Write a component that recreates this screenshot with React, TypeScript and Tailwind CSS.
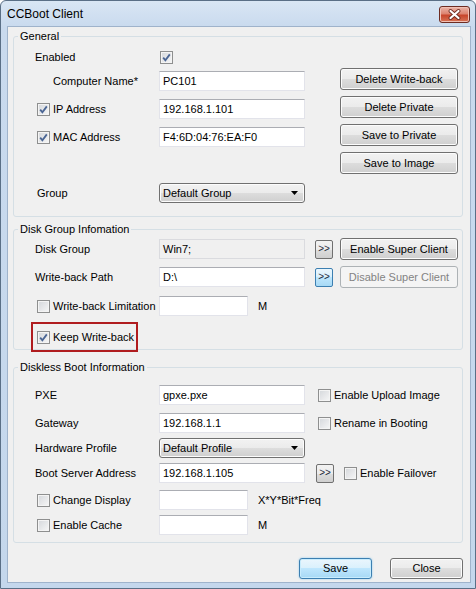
import type { ReactNode } from 'react'

const btn =
  'flex items-center justify-center rounded-[3px] border border-[#707070] bg-[linear-gradient(#f2f2f2_0%,#ebebeb_50%,#dddddd_50%,#cfcfcf_100%)] shadow-[inset_0_0_0_1px_#fcfcfc] text-[11px] text-black'

const field = 'flex h-[20px] items-center border border-[#e2e3ea] border-t-[#abadb3] bg-white px-[3px] text-[11px]'

function Check({ checked = false }: { checked?: boolean }) {
  return (
    <span className="flex h-[13px] w-[13px] shrink-0 items-center justify-center border border-[#8e8f8f] bg-[linear-gradient(135deg,#d4d7db,#f7f7f7)] shadow-[inset_0_0_0_1px_#f4f4f4]">
      {checked && (
        <svg width="11" height="11" viewBox="0 0 11 11">
          <path d="M2.2 5.6 L4.4 8.3 L8.8 2.4" fill="none" stroke="#4a6594" strokeWidth="1.8" />
        </svg>
      )}
    </span>
  )
}

function Arrows({ hot = false }: { hot?: boolean }) {
  return (
    <button
      className={
        hot
          ? 'flex h-[19px] w-[18px] shrink-0 items-center justify-center rounded-[2px] border border-[#3c7fb1] bg-[linear-gradient(#eaf6fd_0%,#d9f0fc_50%,#bee6fd_50%,#a7d9f5_100%)] text-[10px] leading-none text-[#1e2a3a]'
          : 'flex h-[19px] w-[18px] shrink-0 items-center justify-center rounded-[2px] border border-[#707070] bg-[linear-gradient(#f2f2f2_0%,#ebebeb_50%,#dddddd_50%,#cfcfcf_100%)] text-[10px] leading-none text-[#1e2a3a]'
      }
    >
      &gt;&gt;
    </button>
  )
}

function Select({ value }: { value: string }) {
  return (
    <div className={btn + ' h-[20px] w-[146px] !justify-between pl-[3px] pr-[6px]'}>
      <span>{value}</span>
      <svg width="7" height="4" viewBox="0 0 7 4">
        <polygon points="0,0 7,0 3.5,4" fill="#000" />
      </svg>
    </div>
  )
}

function Label({ children, pad }: { children: ReactNode; pad: string }) {
  return <div className={'flex w-[145px] shrink-0 items-center text-[11px] ' + pad}>{children}</div>
}

function CheckLabel({ text, checked = false }: { text: string; checked?: boolean }) {
  return (
    <Label pad="pl-[23px]">
      <Check checked={checked} />
      <span className="ml-[3px]">{text}</span>
    </Label>
  )
}

function Group({ title, className, children }: { title: string; className: string; children: ReactNode }) {
  return (
    <fieldset className={'mx-[5px] mr-[7px] rounded-[3px] border border-[#d5dfe5] ' + className}>
      <legend className="ml-[4px] px-[2px] text-[11px] leading-[14px]">{title}</legend>
      {children}
    </fieldset>
  )
}

export default function App() {
  return (
    <div className="flex h-[589px] w-[476px] flex-col rounded-t-[6px] border border-[#5a6f86] bg-[linear-gradient(#d9e6f4,#c9daee_26px,#c4d7ec)] font-['Liberation_Sans',Arial,sans-serif] text-black">
      {/* title bar */}
      <div className="flex h-[25px] shrink-0 items-start justify-between pl-[6px] pr-[5px]">
        <span className="mt-[5px] text-[12px] leading-[16px]">CCBoot Client</span>
        <button className="mt-[5px] flex h-[17px] w-[31px] items-center justify-center rounded-[3px] border border-[#6d2c22] bg-[linear-gradient(#ebb4a8_0%,#dd8470_45%,#c8462c_55%,#d77457_100%)] shadow-[inset_0_0_0_1px_#f0c0b4]">
          <svg width="13" height="11" viewBox="0 0 13 11">
            <path d="M2.5 2 L10.5 9 M10.5 2 L2.5 9" stroke="#6b2a1f" strokeWidth="3.8" strokeLinecap="round" />
            <path d="M2.5 2 L10.5 9 M10.5 2 L2.5 9" stroke="#ffffff" strokeWidth="2.2" strokeLinecap="round" />
          </svg>
        </button>
      </div>

      {/* client area */}
      <div className="ml-[6px] mr-[4px] flex h-[557px] shrink-0 flex-col border border-[#9fb3cb] bg-[#f0f0f0]">
        <Group title="General" className="mt-[2px] pb-[13px]">
          <div className="flex">
            <div className="flex w-[291px] flex-col">
              <div className="mt-[4px] flex h-[20px] items-center">
                <Label pad="pl-[21px]">Enabled</Label>
                <span className="ml-[1px]">
                  <Check checked />
                </span>
              </div>
              <div className="mt-[4px] flex h-[20px] items-center">
                <Label pad="pl-[39px]">Computer Name*</Label>
                <div className={field + ' w-[146px]'}>PC101</div>
              </div>
              <div className="mt-[8px] flex h-[20px] items-center">
                <CheckLabel text="IP Address" checked />
                <div className={field + ' w-[146px]'}>192.168.1.101</div>
              </div>
              <div className="mt-[8px] flex h-[20px] items-center">
                <CheckLabel text="MAC Address" checked />
                <div className={field + ' w-[146px]'}>F4:6D:04:76:EA:F0</div>
              </div>
              <div className="mt-[36px] flex h-[20px] items-center">
                <Label pad="pl-[23px]">Group</Label>
                <Select value="Default Group" />
              </div>
            </div>
            <div className="ml-[35px] flex flex-col gap-[6px] pt-[25px]">
              <button className={btn + ' h-[22px] w-[118px]'}>Delete Write-back</button>
              <button className={btn + ' h-[22px] w-[118px]'}>Delete Private</button>
              <button className={btn + ' h-[22px] w-[118px]'}>Save to Private</button>
              <button className={btn + ' h-[22px] w-[118px]'}>Save to Image</button>
            </div>
          </div>
        </Group>

        <Group title="Disk Group Infomation" className="mt-[5px]">
          <div className="mt-[2px] flex h-[22px] items-center">
            <Label pad="pl-[21px]">Disk Group</Label>
            <div className="flex h-[20px] w-[146px] items-center border border-[#dadbdf] bg-[#f0f0f0] px-[3px] text-[11px]">
              Win7;
            </div>
            <span className="ml-[10px]">
              <Arrows />
            </span>
            <button className={btn + ' ml-[7px] h-[22px] w-[118px]'}>Enable Super Client</button>
          </div>
          <div className="mt-[6px] flex h-[22px] items-center">
            <Label pad="pl-[21px]">Write-back Path</Label>
            <div className={field + ' w-[146px]'}>D:\</div>
            <span className="ml-[10px]">
              <Arrows hot />
            </span>
            <button className="ml-[7px] flex h-[22px] w-[118px] items-center justify-center rounded-[3px] border border-[#adb2b5] bg-[#f4f4f4] text-[11px] text-[#838383]">
              Disable Super Client
            </button>
          </div>
          <div className="mt-[8px] flex h-[20px] items-center">
            <CheckLabel text="Write-back Limitation" />
            <div className={field + ' w-[89px]'} />
            <span className="ml-[10px] text-[11px]">M</span>
          </div>
          <div className="-mb-[3px] ml-[17px] mt-[6px] flex h-[30px] w-[107px] items-center border-2 border-[#b01c1f] pl-[4px] text-[11px]">
            <Check checked />
            <span className="ml-[3px]">Keep Write-back</span>
          </div>
        </Group>

        <Group title="Diskless Boot Information" className="mt-[10px] pb-[7px]">
          <div className="mt-[11px] flex h-[20px] items-center">
            <Label pad="pl-[21px]">PXE</Label>
            <div className={field + ' w-[146px]'}>gpxe.pxe</div>
            <span className="ml-[13px]">
              <Check />
            </span>
            <span className="ml-[3px] text-[11px]">Enable Upload Image</span>
          </div>
          <div className="mt-[8px] flex h-[20px] items-center">
            <Label pad="pl-[21px]">Gateway</Label>
            <div className={field + ' w-[146px]'}>192.168.1.1</div>
            <span className="ml-[13px]">
              <Check />
            </span>
            <span className="ml-[3px] text-[11px]">Rename in Booting</span>
          </div>
          <div className="mt-[5px] flex h-[20px] items-center">
            <Label pad="pl-[21px]">Hardware Profile</Label>
            <Select value="Default Profile" />
          </div>
          <div className="mt-[5px] flex h-[20px] items-center">
            <Label pad="pl-[21px]">Boot Server Address</Label>
            <div className={field + ' w-[146px]'}>192.168.1.105</div>
            <span className="ml-[11px]">
              <Arrows />
            </span>
            <span className="ml-[10px]">
              <Check />
            </span>
            <span className="ml-[3px] text-[11px]">Enable Failover</span>
          </div>
          <div className="mt-[7px] flex h-[20px] items-center">
            <CheckLabel text="Change Display" />
            <div className={field + ' w-[89px]'} />
            <span className="ml-[10px] text-[11px]">X*Y*Bit*Freq</span>
          </div>
          <div className="mt-[5px] flex h-[20px] items-center">
            <CheckLabel text="Enable Cache" />
            <div className={field + ' w-[89px]'} />
            <span className="ml-[10px] text-[11px]">M</span>
          </div>
        </Group>

        <div className="mr-[7px] mt-[15px] flex justify-end gap-[18px]">
          <button className="flex h-[21px] w-[73px] items-center justify-center rounded-[3px] border border-[#3c7fb1] bg-[linear-gradient(#eaf6fd_0%,#d9f0fc_50%,#bee6fd_50%,#a7d9f5_100%)] shadow-[inset_0_0_0_1px_#c8ecfd,0_0_2px_#7fc4ee] text-[11px]">
            Save
          </button>
          <button className={btn + ' h-[21px] w-[73px]'}>Close</button>
        </div>
      </div>
    </div>
  )
}
